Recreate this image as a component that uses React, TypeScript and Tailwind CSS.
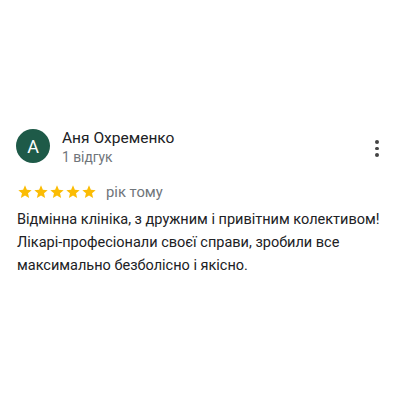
import React from 'react'

const Star: React.FC = () => (
  <svg width="16" height="16" viewBox="0 0 24 24" className="fill-[#fbbc04]">
    <path d="M12 17.27L18.18 21l-1.64-7.03L22 9.24l-7.19-.61L12 2 9.19 8.63 2 9.24l5.46 4.73L5.82 21z" />
  </svg>
)

const App: React.FC = () => {
  return (
    <div className="w-[400px] h-[400px] bg-white font-['Roboto',sans-serif] pt-[129px] pl-[16px] pr-[8px]">
      <div className="flex items-start">
        <div className="w-[34px] h-[34px] rounded-full bg-[#1e5a48] text-white flex items-center justify-center text-[18px]">
          A
        </div>
        <div className="ml-[12px] flex-1">
          <div className="text-[15.5px] leading-[19px] text-[#202124]">Аня Охременко</div>
          <div className="text-[13.8px] leading-[18px] text-[#70757a]">1 відгук</div>
        </div>
        <div className="w-[20px] mr-[5px] flex flex-col items-center gap-[3px] pt-[11px]">
          <span className="w-[3.5px] h-[3.5px] rounded-full bg-[#444]" />
          <span className="w-[3.5px] h-[3.5px] rounded-full bg-[#444]" />
          <span className="w-[3.5px] h-[3.5px] rounded-full bg-[#444]" />
        </div>
      </div>
      <div className="flex items-center mt-[17px] pl-[1px]">
        <div className="flex">
          <Star />
          <Star />
          <Star />
          <Star />
          <Star />
        </div>
        <span className="ml-[9px] text-[14.8px] text-[#70757a] leading-[18px]">рік тому</span>
      </div>
      <p className="mt-[7px] pl-[1px] text-[14.5px] leading-[23px] text-[#202124]">
        Відмінна клініка, з дружним і привітним колективом! Лікарі-професіонали своєї справи, зробили все максимально безболісно і якісно.
      </p>
    </div>
  )
}

export default App
